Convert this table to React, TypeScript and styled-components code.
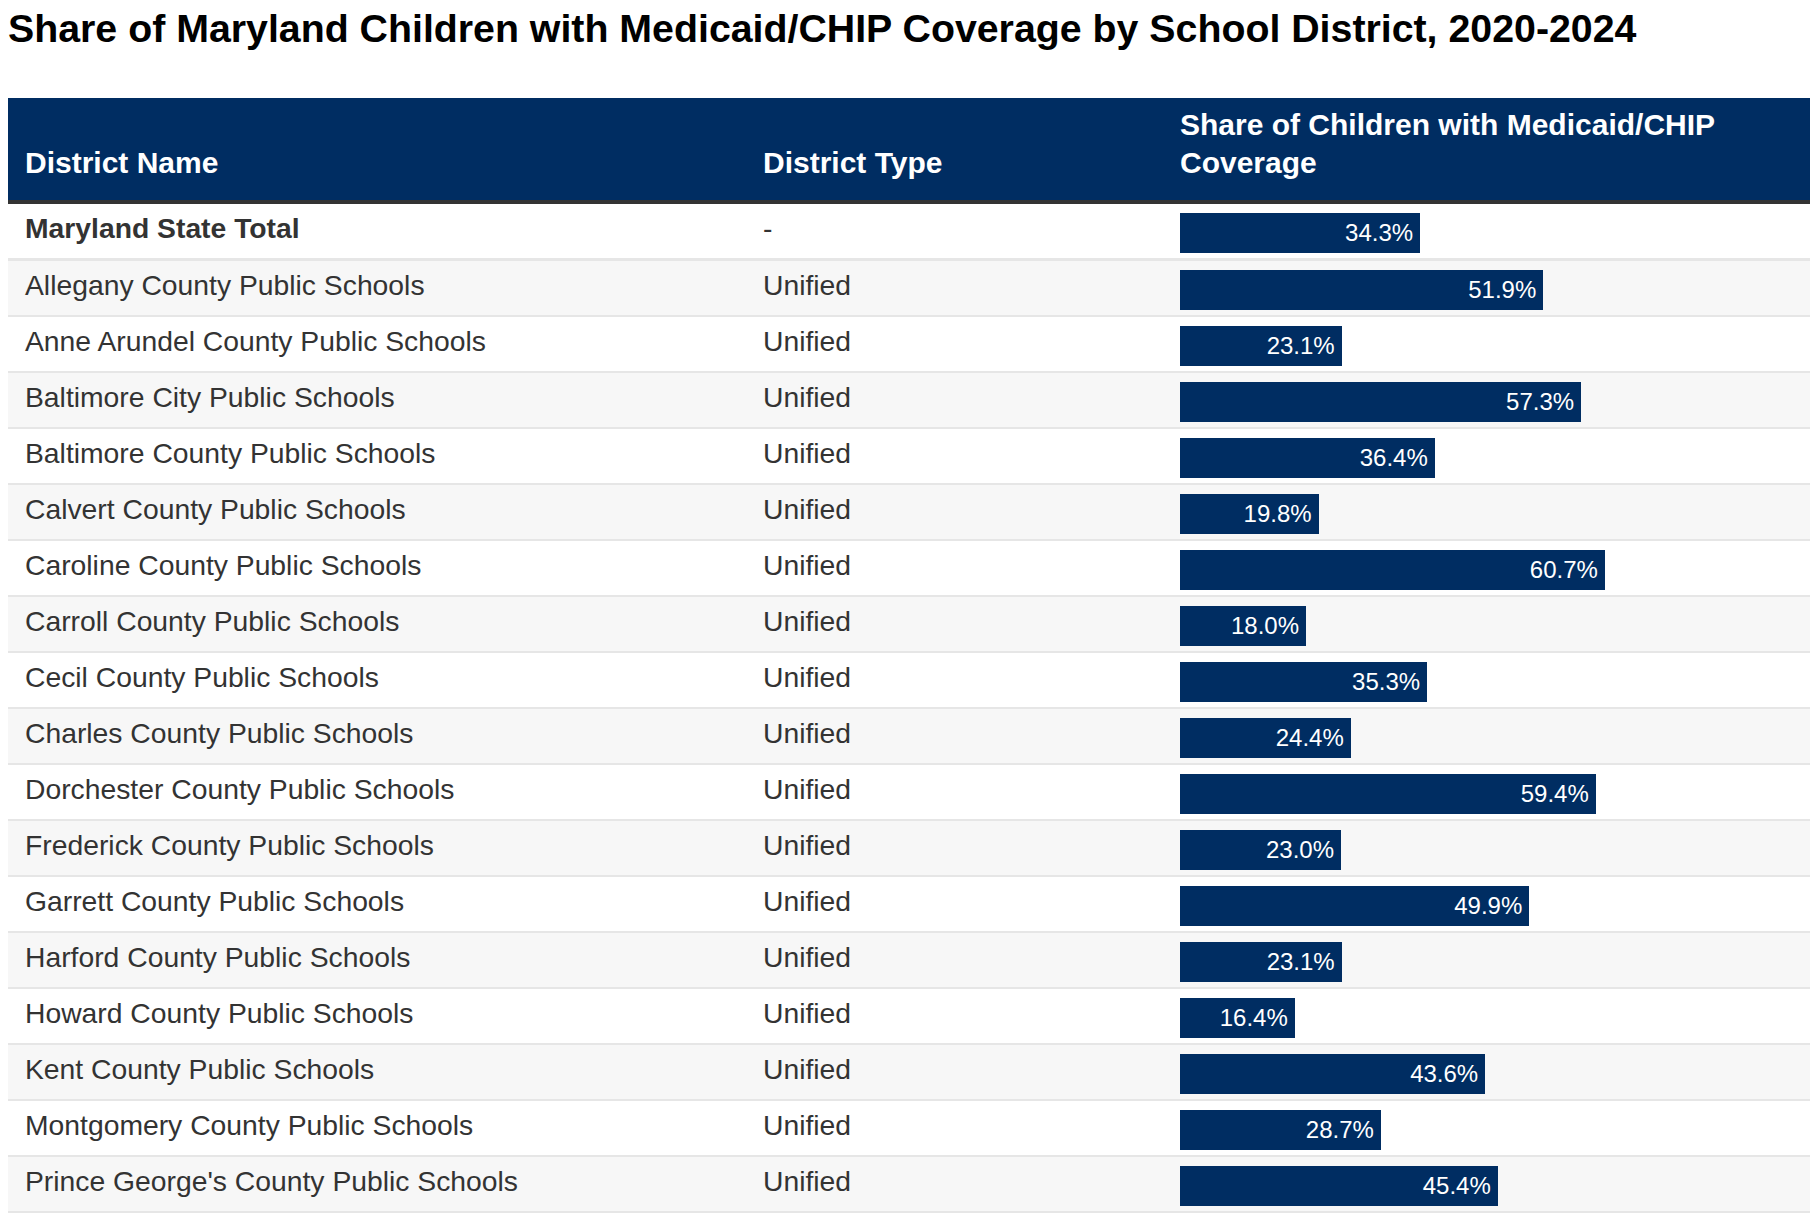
import React from "react";
import styled, { createGlobalStyle } from "styled-components";

type District = {
	name: string;
	type: string;
	share: number;
	total?: boolean;
};

const districts: District[] = [
	{ name: "Maryland State Total", type: "-", share: 34.3, total: true },
	{ name: "Allegany County Public Schools", type: "Unified", share: 51.9 },
	{ name: "Anne Arundel County Public Schools", type: "Unified", share: 23.1 },
	{ name: "Baltimore City Public Schools", type: "Unified", share: 57.3 },
	{ name: "Baltimore County Public Schools", type: "Unified", share: 36.4 },
	{ name: "Calvert County Public Schools", type: "Unified", share: 19.8 },
	{ name: "Caroline County Public Schools", type: "Unified", share: 60.7 },
	{ name: "Carroll County Public Schools", type: "Unified", share: 18.0 },
	{ name: "Cecil County Public Schools", type: "Unified", share: 35.3 },
	{ name: "Charles County Public Schools", type: "Unified", share: 24.4 },
	{ name: "Dorchester County Public Schools", type: "Unified", share: 59.4 },
	{ name: "Frederick County Public Schools", type: "Unified", share: 23.0 },
	{ name: "Garrett County Public Schools", type: "Unified", share: 49.9 },
	{ name: "Harford County Public Schools", type: "Unified", share: 23.1 },
	{ name: "Howard County Public Schools", type: "Unified", share: 16.4 },
	{ name: "Kent County Public Schools", type: "Unified", share: 43.6 },
	{ name: "Montgomery County Public Schools", type: "Unified", share: 28.7 },
	{ name: "Prince George's County Public Schools", type: "Unified", share: 45.4 },
];

// 100% share = 700px of bar
const BAR_SCALE = 7;

export default function App() {
	return (
		<>
			<GlobalStyle />
			<Page>
				<Title>Share of Maryland Children with Medicaid/CHIP Coverage by School District, 2020-2024</Title>
				<Table>
					<colgroup>
						<col style={{ width: 738 }} />
						<col style={{ width: 417 }} />
						<col />
					</colgroup>
					<thead>
						<tr>
							<HeadCell>District Name</HeadCell>
							<HeadCell>District Type</HeadCell>
							<HeadCell>Share of Children with Medicaid/CHIP Coverage</HeadCell>
						</tr>
					</thead>
					<tbody>
						{districts.map((d, i) => (
							<Row key={d.name} $striped={i % 2 === 1} $first={i === 0}>
								<Cell $bold={d.total}>{d.name}</Cell>
								<Cell>{d.type}</Cell>
								<BarCell>
									<Bar style={{ width: d.share * BAR_SCALE }}>{d.share.toFixed(1)}%</Bar>
								</BarCell>
							</Row>
						))}
					</tbody>
				</Table>
			</Page>
		</>
	);
}

const GlobalStyle = createGlobalStyle`
	body {
		margin: 8px 10px 8px 8px;
		background: #ffffff;
		font-family: "Liberation Sans", Arial, Helvetica, sans-serif;
		color: #333333;
	}
`;

const Page = styled.main`
	display: flex;
	flex-direction: column;
`;

const Title = styled.h1`
	margin: -2px 0 48px 0;
	font-size: 39.3px;
	font-weight: bold;
	line-height: 44px;
	color: #000000;
	white-space: nowrap;
`;

const Table = styled.table`
	width: 100%;
	border-collapse: collapse;
	table-layout: fixed;
`;

const HeadCell = styled.th`
	height: 103px;
	box-sizing: border-box;
	padding: 8px 17px 18px;
	background: #002d62;
	color: #ffffff;
	font-size: 30px;
	font-weight: bold;
	line-height: 38px;
	text-align: left;
	vertical-align: bottom;
	border-bottom: 4px solid #333333;
`;

const Row = styled.tr<{ $striped: boolean; $first: boolean }>`
	background: ${p => (p.$striped ? "#f7f7f7" : "#ffffff")};
	border-bottom: ${p => (p.$first ? "3px" : "2px")} solid #e6e6e6;
`;

const Cell = styled.td<{ $bold?: boolean }>`
	height: 54px;
	box-sizing: border-box;
	padding: 5px 17px 0;
	font-size: 28.3px;
	line-height: 38px;
	font-weight: ${p => (p.$bold ? "bold" : "normal")};
	vertical-align: top;
	white-space: nowrap;
`;

const BarCell = styled.td`
	height: 54px;
	box-sizing: border-box;
	padding: 9px 17px 5px;
	vertical-align: top;
`;

const Bar = styled.div`
	height: 40px;
	box-sizing: border-box;
	display: flex;
	align-items: center;
	justify-content: flex-end;
	padding-right: 7px;
	background: #002d62;
	color: #ffffff;
	font-size: 24px;
`;
